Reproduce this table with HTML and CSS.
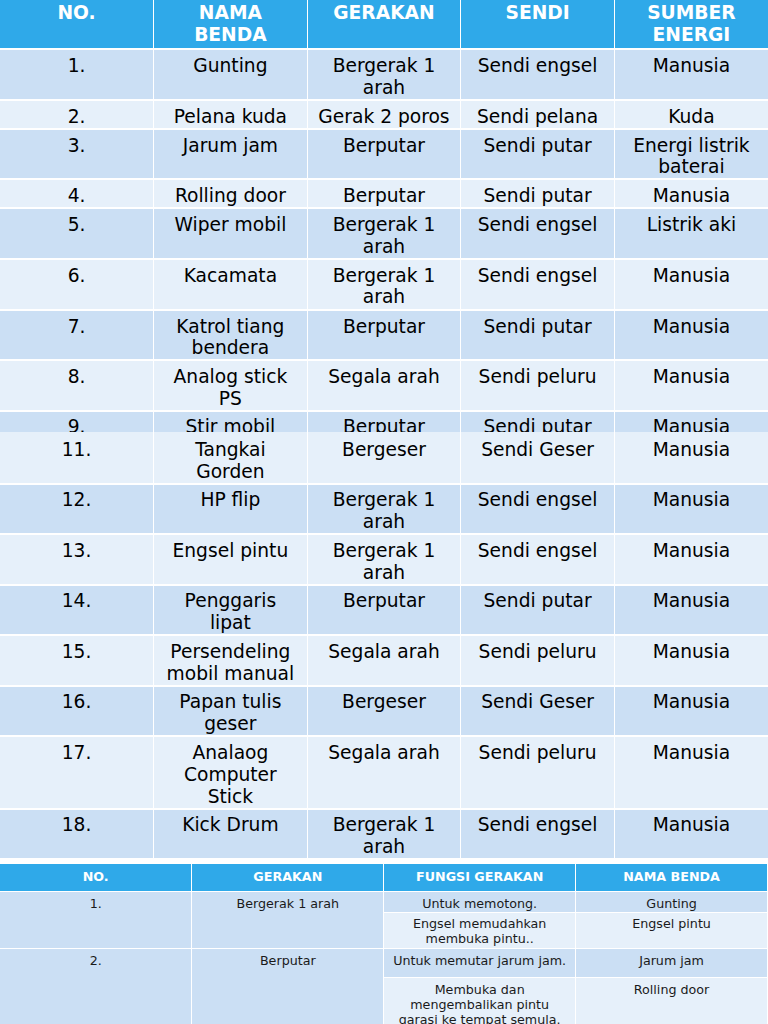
FILE: index.html
```html
<!DOCTYPE html>
<html>
<head>
<meta charset="utf-8">
<link rel="stylesheet" href="styles.css">
</head>
<body>
<table class="t1">
  <colgroup><col><col><col><col><col></colgroup>
  <tr class="hd"><td>NO.</td><td>NAMA BENDA</td><td>GERAKAN</td><td>SENDI</td><td>SUMBER ENERGI</td></tr>
  <tr class="dk"><td>1.</td><td>Gunting</td><td>Bergerak 1 arah</td><td>Sendi engsel</td><td>Manusia</td></tr>
  <tr class="lt"><td>2.</td><td>Pelana kuda</td><td>Gerak 2 poros</td><td>Sendi pelana</td><td>Kuda</td></tr>
  <tr class="dk"><td>3.</td><td>Jarum jam</td><td>Berputar</td><td>Sendi putar</td><td>Energi listrik baterai</td></tr>
  <tr class="lt"><td>4.</td><td>Rolling door</td><td>Berputar</td><td>Sendi putar</td><td>Manusia</td></tr>
  <tr class="dk"><td>5.</td><td>Wiper mobil</td><td>Bergerak 1 arah</td><td>Sendi engsel</td><td>Listrik aki</td></tr>
  <tr class="lt"><td>6.</td><td>Kacamata</td><td>Bergerak 1 arah</td><td>Sendi engsel</td><td>Manusia</td></tr>
  <tr class="dk"><td>7.</td><td>Katrol tiang bendera</td><td>Berputar</td><td>Sendi putar</td><td>Manusia</td></tr>
  <tr class="lt"><td>8.</td><td>Analog stick PS</td><td>Segala arah</td><td>Sendi peluru</td><td>Manusia</td></tr>
  <tr class="dk clip"><td><div>9.</div></td><td><div>Stir mobil</div></td><td><div>Berputar</div></td><td><div>Sendi putar</div></td><td><div>Manusia</div></td></tr>
</table>
<table class="t1 t1b">
  <colgroup><col><col><col><col><col></colgroup>
  <tr class="lt first"><td>11.</td><td>Tangkai Gorden</td><td>Bergeser</td><td>Sendi Geser</td><td>Manusia</td></tr>
  <tr class="dk"><td>12.</td><td>HP flip</td><td>Bergerak 1 arah</td><td>Sendi engsel</td><td>Manusia</td></tr>
  <tr class="lt"><td>13.</td><td>Engsel pintu</td><td>Bergerak 1 arah</td><td>Sendi engsel</td><td>Manusia</td></tr>
  <tr class="dk"><td>14.</td><td>Penggaris lipat</td><td>Berputar</td><td>Sendi putar</td><td>Manusia</td></tr>
  <tr class="lt"><td>15.</td><td>Persendeling mobil manual</td><td>Segala arah</td><td>Sendi peluru</td><td>Manusia</td></tr>
  <tr class="dk"><td>16.</td><td>Papan tulis geser</td><td>Bergeser</td><td>Sendi Geser</td><td>Manusia</td></tr>
  <tr class="lt"><td>17.</td><td>Analaog Computer Stick</td><td>Segala arah</td><td>Sendi peluru</td><td>Manusia</td></tr>
  <tr class="dk"><td>18.</td><td>Kick Drum</td><td>Bergerak 1 arah</td><td>Sendi engsel</td><td>Manusia</td></tr>
</table>
<div class="gap"></div>
<table class="t2">
  <colgroup><col><col><col><col></colgroup>
  <tr class="hd"><td>NO.</td><td>GERAKAN</td><td>FUNGSI GERAKAN</td><td>NAMA BENDA</td></tr>
  <tr class="dk ra"><td rowspan="2" class="dk">1.</td><td rowspan="2" class="dk">Bergerak 1 arah</td><td>Untuk memotong.</td><td>Gunting</td></tr>
  <tr class="lt rb"><td>Engsel memudahkan membuka pintu..</td><td>Engsel pintu</td></tr>
  <tr class="dk rc"><td rowspan="2" class="dk">2.</td><td rowspan="2" class="dk">Berputar</td><td>Untuk memutar jarum jam.</td><td>Jarum jam</td></tr>
  <tr class="lt rd"><td>Membuka dan mengembalikan pintu garasi ke tempat semula.</td><td>Rolling door</td></tr>
</table>
</body>
</html>
```

FILE: styles.css
```css
html, body {
  margin: 0;
  padding: 0;
  background: #ffffff;
}
body {
  width: 768px;
  overflow: hidden;
  font-family: "DejaVu Sans", "Liberation Sans", sans-serif;
  color: #000000;
}
table {
  width: 768px;
  border-collapse: collapse;
  table-layout: fixed;
  border-spacing: 0;
}
.t1 col { width: 20%; }
.t2 col { width: 25%; }
td {
  text-align: center;
  vertical-align: top;
  border-right: 1px solid #ffffff;
  border-bottom: 2px solid #ffffff;
  overflow: hidden;
}
td:last-child { border-right: 0; }

.hd td {
  background: #2fa9e9;
  color: #ffffff;
  font-weight: bold;
}
.dk td, td.dk { background: #cbdff4; }
.lt td { background: #e6f0fa; }

.t1 td {
  font-size: 18.67px;
  line-height: 21.5px;
  padding: 5px 8.5px 0.6px 8.5px;
}
.t1 .hd td {
  padding: 2px 8.5px 3px 8.5px;
}
.t1 .clip td {
  padding-top: 4px;
  padding-bottom: 0;
  border-bottom: 0;
}
.t1 .clip td div {
  height: 16px;
  overflow: hidden;
}
.t1b td {
  line-height: 22px;
  padding-top: 4.5px;
  padding-bottom: 0;
}
.t1b .first td {
  padding-top: 7px;
}
.gap { height: 4px; }

.t2 td {
  font-size: 12.7px;
  line-height: 15px;
  border-bottom: 1px solid #ffffff;
  border-right: 1.5px solid #ffffff;
  padding: 3px 7px 2px 7px;
  color: #1a1a1a;
}
.t2 .hd td {
  color: #ffffff;
  padding: 4.5px 7px 7.5px 7px;
}
.t2 .ra td { padding-top: 3.5px; padding-bottom: 1.5px; }
.t2 .rb td { padding-top: 3px; padding-bottom: 2px; }
.t2 .rc td { padding-top: 4px; padding-bottom: 9px; }
.t2 .rd td { padding-top: 4px; padding-bottom: 4px; }
```
